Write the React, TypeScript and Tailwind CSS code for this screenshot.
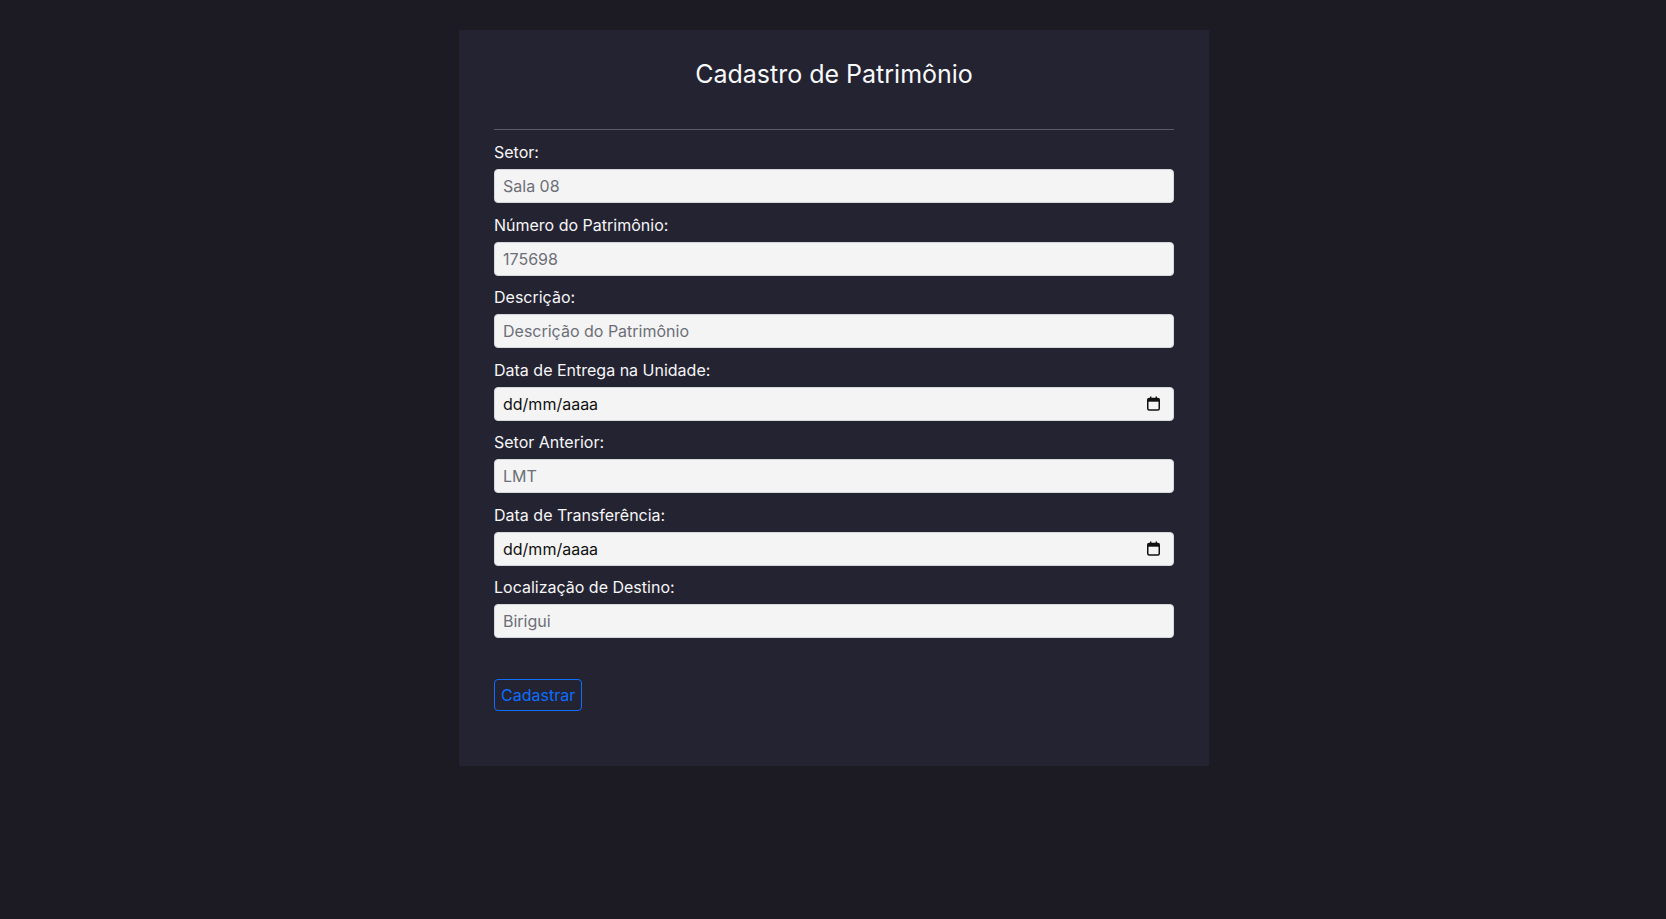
const font = { fontFamily: "Inter, 'Noto Sans', sans-serif" };

interface FieldProps {
  label: string;
  placeholder?: string;
  date?: boolean;
}

function CalendarIcon() {
  return (
    <svg width="13" height="15" viewBox="0 0 13 15" className="shrink-0">
      <rect x="3" y="0.5" width="1.4" height="2.5" fill="#111" />
      <rect x="8.6" y="0.5" width="1.4" height="2.5" fill="#111" />
      <rect x="0.75" y="2.5" width="11.5" height="11.5" rx="1.5" fill="none" stroke="#111" strokeWidth="1.5" />
      <rect x="0.75" y="2.5" width="11.5" height="3.2" fill="#111" />
    </svg>
  );
}

function Field({ label, placeholder, date }: FieldProps) {
  return (
    <div className="mb-[9.5px] flex flex-col">
      <label className="mb-[5px] text-[16px] leading-6 text-[#f6f6f8]">{label}</label>
      {date ? (
        <div className="flex h-[34px] items-center justify-between rounded-[4px] border border-[#d5d7dc] bg-[#f4f4f4] pl-2 pr-[13px] text-[16px] text-[#111]">
          <span>dd/mm/aaaa</span>
          <CalendarIcon />
        </div>
      ) : (
        <input
          type="text"
          placeholder={placeholder}
          className="h-[34px] rounded-[4px] border border-[#d5d7dc] bg-[#f4f4f4] px-2 text-[16px] text-[#212529] outline-none placeholder:text-[#6c6f78]"
          style={font}
        />
      )}
    </div>
  );
}

export default function App() {
  return (
    <div className="min-h-[919px] w-full bg-[#1c1b24] pt-[30px]" style={font}>
      <div className="mx-auto w-[750px] translate-x-[1px] bg-[#242331] px-[35px] pb-[55px] pt-[29px]">
        <h2 className="text-center text-[25px] font-normal leading-[1.2] text-[#f8f9fa]">
          Cadastro de Patrimônio
        </h2>
        <hr className="mt-[40px] mb-[10px] border-t border-[#5b5a69]" />
        <form onSubmit={(e) => e.preventDefault()}>
          <Field label="Setor:" placeholder="Sala 08" />
          <Field label="Número do Patrimônio:" placeholder="175698" />
          <Field label="Descrição:" placeholder="Descrição do Patrimônio" />
          <Field label="Data de Entrega na Unidade:" date />
          <Field label="Setor Anterior:" placeholder="LMT" />
          <Field label="Data de Transferência:" date />
          <Field label="Localização de Destino:" placeholder="Birigui" />
          <button
            type="submit"
            className="mt-[31px] h-[32px] rounded-[4px] border border-[#0d6efd] px-[6px] text-[16px] leading-none text-[#0d6efd]"
            style={font}
          >
            Cadastrar
          </button>
        </form>
      </div>
    </div>
  );
}
